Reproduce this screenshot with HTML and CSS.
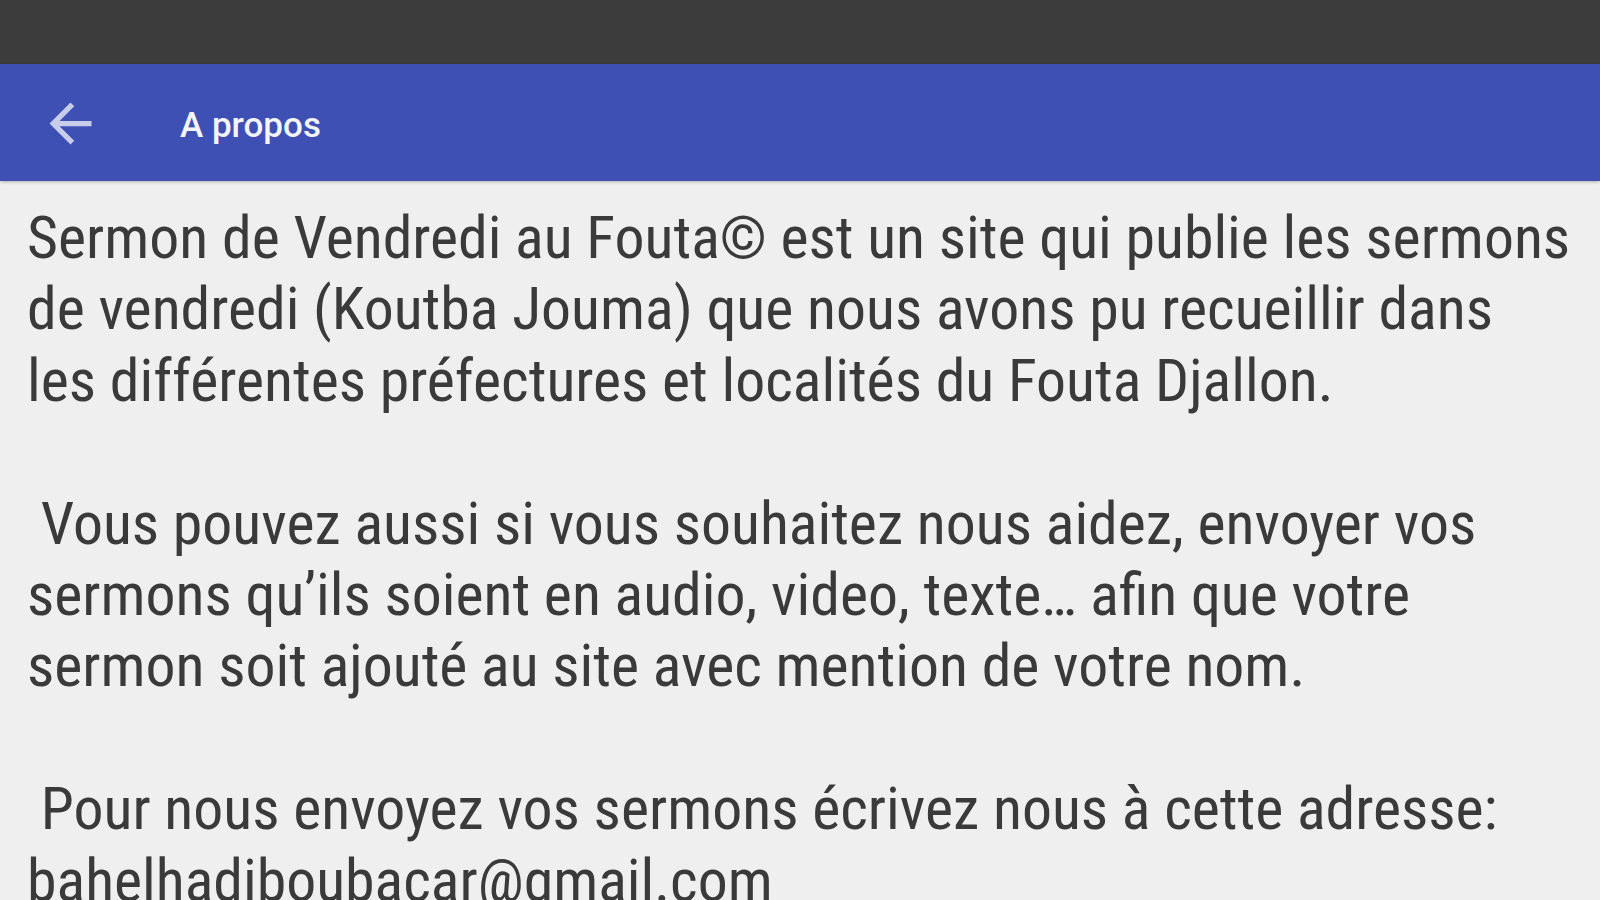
FILE: index.html
```html
<!DOCTYPE html>
<html lang="fr">
<head>
  <meta charset="UTF-8">
  <title>A propos</title>
  <link rel="stylesheet" href="styles.css">
</head>
<body>
<div class="status-bar"></div>

<header class="app-bar">
  <button class="back-button" aria-label="Retour">
    <svg viewBox="0 0 24 24" width="63" height="63">
      <path d="M20 11H7.83l5.59-5.59L12 4l-8 8 8 8 1.41-1.41L7.83 13H20v-2z" fill="currentColor"/>
    </svg>
  </button>
  <h1 class="app-title">A propos</h1>
</header>

<main class="about-text">
  <p>Sermon de Vendredi au Fouta© est un site qui publie les sermons<br>
  de vendredi (Koutba Jouma) que nous avons pu recueillir dans<br>
  les différentes préfectures et localités du Fouta Djallon.</p>

  <p>&nbsp;Vous pouvez aussi si vous souhaitez nous aidez, envoyer vos<br>
  sermons qu’ils soient en audio, video, texte… afin que votre<br>
  sermon soit ajouté au site avec mention de votre nom.</p>

  <p>&nbsp;Pour nous envoyez vos sermons écrivez nous à cette adresse:<br>
  bahelhadiboubacar@gmail.com</p>
</main>
</body>
</html>
```
FILE: styles.css
```css
html, body {
  margin: 0;
  padding: 0;
  height: 100%;
  overflow: hidden;
  background: #efefef;
}
.status-bar {
  height: 64px;
  background: #3c3c3c;
}
.app-bar {
  height: 117px;
  display: flex;
  align-items: center;
  padding-left: 39px;
  background: #3f50b5;
  box-shadow: 0 1px 3px rgba(0,0,0,0.25);
  position: relative;
}
.back-button {
  display: flex;
  padding: 2px 0 0;
  margin: 0;
  border: none;
  background: none;
  color: #c9cdec;
  cursor: pointer;
}
.app-title {
  margin: 0 0 0 78px;
  padding-top: 6px;
  font-family: Roboto, sans-serif;
  font-weight: 500;
  font-size: 35px;
  color: #f4f5fb;
}
.about-text {
  padding: 22px 0 0 27px;
  font-family: "Roboto Condensed", Roboto, sans-serif;
  font-size: 59.8px;
  line-height: 71.4px;
  color: #3a3a3a;
  white-space: nowrap;
}
.about-text p {
  margin: 0 0 71.4px;
}
```
